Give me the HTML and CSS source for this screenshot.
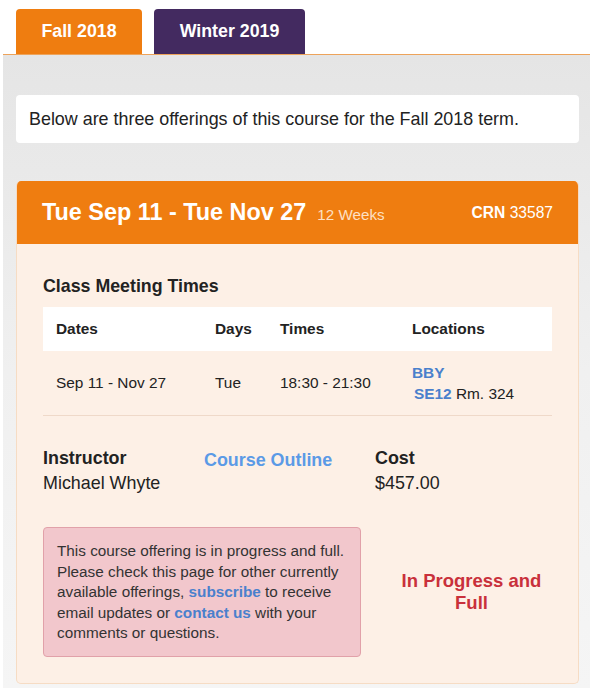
FILE: index.html
```html
<!DOCTYPE html>
<html>
<head>
<meta charset="utf-8">
<link rel="stylesheet" href="styles.css">
</head>
<body>
<div class="tabs">
  <div class="tab tab-fall">Fall 2018</div>
  <div class="tab tab-winter">Winter 2019</div>
</div>
<div class="panel">
  <div class="note">Below are three offerings of this course for the Fall 2018 term.</div>
  <div class="card">
    <div class="card-head">
      <div class="head-left"><span class="dates">Tue Sep 11 - Tue Nov 27</span><span class="weeks">12 Weeks</span></div>
      <div class="crn"><b>CRN</b> 33587</div>
    </div>
    <div class="card-body">
      <h3 class="section-title">Class Meeting Times</h3>
      <div class="table">
        <div class="row thead">
          <div class="c1">Dates</div><div class="c2">Days</div><div class="c3">Times</div><div class="c4">Locations</div>
        </div>
        <div class="row tbody">
          <div class="c1">Sep 11 - Nov 27</div><div class="c2">Tue</div><div class="c3">18:30 - 21:30</div>
          <div class="c4 loc"><a class="link">BBY</a><span class="room"><a class="link">SE12</a> Rm. 324</span></div>
        </div>
      </div>
      <div class="info">
        <div class="info-col i1"><div class="label">Instructor</div><div class="val">Michael Whyte</div></div>
        <div class="info-col i2"><a class="outline">Course Outline</a></div>
        <div class="info-col i3"><div class="label">Cost</div><div class="val">$457.00</div></div>
      </div>
      <div class="status">
        <div class="alert">This course offering is in progress and full. Please check this page for other currently available offerings, <a class="link">subscribe</a> to receive email updates or <a class="link">contact us</a> with your comments or questions.</div>
        <div class="state">In Progress and<br>Full</div>
      </div>
    </div>
  </div>
</div>
</body>
</html>
```
FILE: styles.css
```css
html, body { margin: 0; padding: 0; background: #fff; }
body { font-family: "Liberation Sans", Arial, sans-serif; color: #222; height: 689px; overflow: hidden; }
.tabs { display: flex; gap: 12px; padding: 9px 0 0 16px; height: 45px; }
.tab { color: #fff; font-weight: bold; font-size: 17.8px; display: flex; align-items: center; justify-content: center; border-radius: 4px 4px 0 0; }
.tab-fall { background: #ef7d10; width: 126px; }
.tab-winter { background: #432a60; width: 151px; }
.panel { margin: 0 2px 0 3px; border-top: 1px solid #eda35a; background: linear-gradient(#e5e5e5, #f0f0f0 50%, #f5f5f5); padding: 40px 11px 0 13px; height: 634px; box-sizing: border-box; }
.note { background: #fff; border-radius: 4px; font-size: 17.9px; line-height: 20px; padding: 14px 13px 14px; color: #222; }
.card { margin-top: 38px; border-radius: 5px; overflow: hidden; border: 1px solid #f6dcc4; border-top: 0; background: #fdf0e6; }
.card-head { background: #ef7d10; color: #fff; height: 63px; display: flex; align-items: center; justify-content: space-between; padding: 0 26px 0 26px; margin: 0 -1px; }
.dates { font-weight: bold; font-size: 23.4px; }
.weeks { font-size: 15.2px; color: #fde0c4; margin-left: 11px; }
.crn { font-size: 15.6px; }
.card-body { padding: 32px 26px 26px; }
.section-title { margin: 0 0 10px; font-size: 17.8px; font-weight: bold; color: #222; }
.table { font-size: 15.4px; }
.row { display: flex; align-items: center; }
.thead { background: #fff; height: 44px; font-weight: bold; }
.tbody { height: 64px; border-bottom: 1px solid #efd9c9; }
.c1 { width: 172px; padding-left: 13px; box-sizing: border-box; }
.c2 { width: 65px; }
.c3 { width: 132px; }
.c4 { flex: 1; }
.loc { display: flex; flex-direction: column; gap: 3px; }
.room { padding-left: 2px; }
.link { color: #4a80cc; font-weight: bold; }
.info { display: flex; margin-top: 32px; font-size: 17.9px; }
.i1 { width: 161px; }
.i2 { width: 171px; padding-top: 2px; }
.label { font-weight: bold; }
.val { margin-top: 4px; }
.outline { color: #5b9ae6; font-weight: bold; }
.status { display: flex; align-items: center; margin-top: 33px; }
.alert { width: 318px; box-sizing: border-box; background: #f2c7cc; border: 1px solid #e1a1a9; border-radius: 4px; padding: 13px 13px 12px; font-size: 15.3px; line-height: 20.5px; color: #333; }
.state { flex: 1; text-align: center; color: #c9303b; font-weight: bold; font-size: 18.5px; line-height: 22px; padding-left: 30px; }
```
